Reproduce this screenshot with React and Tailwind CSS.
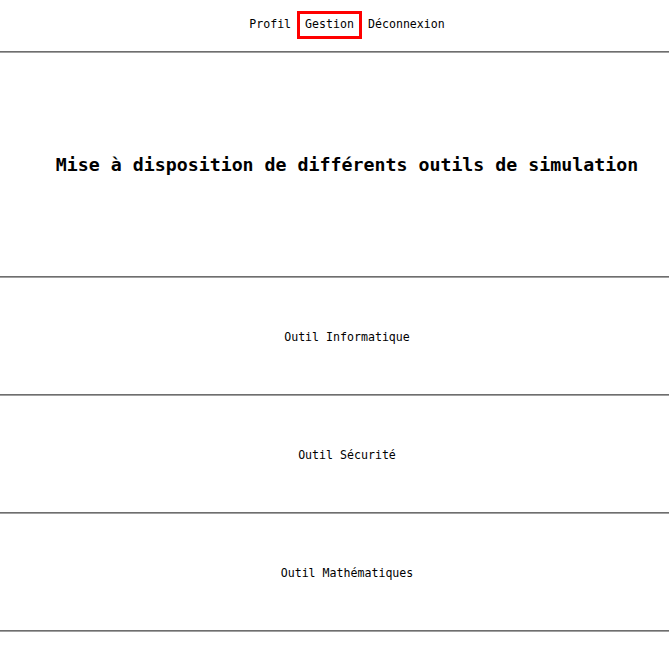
export default function App() {
  const mono = { fontFamily: '"DejaVu Sans Mono", "Liberation Mono", monospace' };
  const Hr = () => (
    <div className="w-full h-[2px] border-t border-t-[#6e6e6e] border-b border-b-[#a0a0a0]" />
  );
  const Tool = ({ label }) => (
    <div className="h-[116px] flex items-center justify-center pl-[25px] pt-[3px] text-[11.6px] text-black">
      {label}
    </div>
  );
  return (
    <div className="w-[669px] min-h-[669px] bg-white text-black" style={mono}>
      <nav className="h-[51px] flex items-center justify-center gap-[6px] pl-[25px] pb-[1px] text-[11.6px]">
        <span>Profil</span>
        <span className="h-[28px] flex items-center border-[3px] border-[#ff0000] px-[5px]">Gestion</span>
        <span>Déconnexion</span>
      </nav>
      <Hr />
      <div className="h-[223px] flex items-center justify-center pl-[25px]">
        <h1 className="text-[18.25px] font-bold whitespace-nowrap">
          Mise à disposition de différents outils de simulation
        </h1>
      </div>
      <Hr />
      <Tool label="Outil Informatique" />
      <Hr />
      <Tool label="Outil Sécurité" />
      <Hr />
      <Tool label="Outil Mathématiques" />
      <Hr />
    </div>
  );
}
